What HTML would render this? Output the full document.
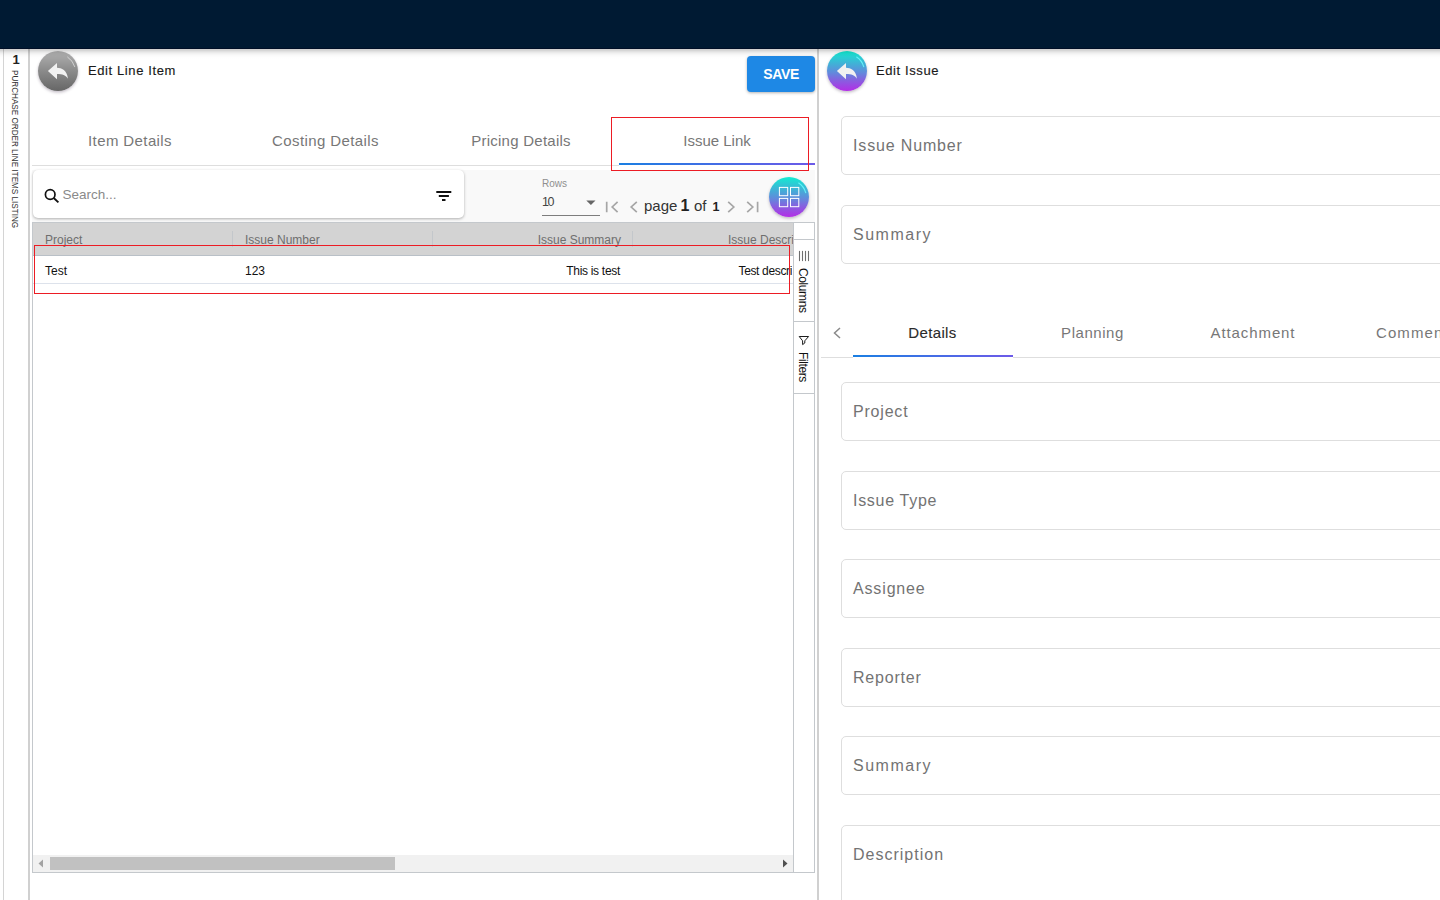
<!DOCTYPE html>
<html lang="en">
<head>
<meta charset="utf-8">
<title>Edit Line Item</title>
<style>
*{box-sizing:border-box;margin:0;padding:0}
html,body{width:1440px;height:900px;overflow:hidden;background:#fff}
body{font-family:"Liberation Sans",sans-serif;color:#222;position:relative}
.abs{position:absolute}
.t{position:absolute;white-space:nowrap;line-height:1}
#topbar{left:0;top:0;width:1440px;height:49px;background:#001a33;border-bottom:1px solid #000f27;z-index:10}
#topshadow{left:0;top:49px;width:1440px;height:11px;z-index:10;background:linear-gradient(180deg,rgba(0,0,0,.17) 0,rgba(0,0,0,.19) 1px,rgba(0,0,0,.135) 2px,rgba(0,0,0,.1) 3px,rgba(0,0,0,.067) 4px,rgba(0,0,0,.043) 5px,rgba(0,0,0,.027) 6px,rgba(0,0,0,.016) 7px,rgba(0,0,0,.008) 8px,rgba(0,0,0,.004) 9px,rgba(0,0,0,0) 10px)}
/* left strip */
#strip-l1{left:3px;top:48px;width:1px;height:852px;background:#d4d4d4}
#strip-l2{left:28px;top:48px;width:2px;height:852px;background:#d0d0d0}
#strip-num{left:12.5px;top:53px;font-size:13px;font-weight:bold;color:#222}
#strip-txt{left:19.5px;top:70px;font-size:9.8px;color:#333;transform-origin:0 0;transform:rotate(90deg) scaleX(.83);letter-spacing:0}
/* divider */
#divider{left:817px;top:48px;width:2px;height:852px;background:#d0d0d0}
.circ{border-radius:50%;width:40px;height:40px;box-shadow:0 1.5px 3px rgba(60,40,70,.3)}
#back1{left:38px;top:51px;background:linear-gradient(180deg,#b2b2b2 0%,#8e8e8e 45%,#666 100%)}
#back2{left:827px;top:51px;background:linear-gradient(180deg,#12ecd2 0%,#3eb4d6 30%,#6388dc 55%,#8a5ce0 75%,#b32ee6 100%)}
#gridbtn{left:769px;top:177px;background:linear-gradient(180deg,#12ecd2 0%,#3eb4d6 30%,#6388dc 55%,#8a5ce0 75%,#b32ee6 100%)}
.ttl{font-size:13px;color:#1a1a1a;font-weight:normal;-webkit-text-stroke:.15px #1a1a1a}
#save{left:747px;top:56px;width:68px;height:36px;background:#1e88e5;border-radius:4px;box-shadow:0 1px 3px rgba(0,0,0,.3);color:#fff;font-weight:bold;font-size:14px;text-align:center;line-height:37px;letter-spacing:-.3px;text-indent:.3px}
.tab{font-size:15px;color:#777;transform:translateX(-50%)}
.fld{position:absolute;left:841px;width:640px;height:59px;border:1px solid #dedede;border-radius:5px;background:#fff}
.fld span{position:absolute;left:11px;top:21px;font-size:16px;line-height:1;color:#737373;white-space:nowrap}
.hdr{font-size:12px;color:#6e6e6e}
.cell{font-size:12px;color:#111}
</style>
</head>
<body>
<div id="topbar" class="abs"></div>
<div id="topshadow" class="abs"></div>

<!-- left strip -->
<div id="strip-l1" class="abs"></div>
<div id="strip-l2" class="abs"></div>
<div id="strip-num" class="t">1</div>
<div id="strip-txt" class="t">PURCHASE ORDER LINE ITEMS LISTING</div>

<!-- LEFT PANEL -->
<div id="back1" class="abs circ">
<svg width="40" height="40" viewBox="0 0 40 40"><path d="M9.9 19.9 L19 11.9 V16.8 C23.5 16.9 29.2 19.3 29.9 27.8 C27.8 24.4 24.5 23.1 19 23.1 V28.2 Z" fill="#f1f1f1"/><path d="M29.7 6.1 A17.5 17.5 0 0 1 36.7 15.6" stroke="rgba(255,255,255,.55)" stroke-width="1" fill="none" stroke-linecap="round"/></svg>
</div>
<div class="t ttl" style="left:88px;top:64px;letter-spacing:.6px">Edit Line Item</div>
<div id="save" class="abs">SAVE</div>

<!-- tabs -->
<div class="abs" style="left:32px;top:165px;width:783px;height:1px;background:#dedede"></div>
<div class="t tab" style="left:130px;top:133px;letter-spacing:.4px">Item Details</div>
<div class="t tab" style="left:325.5px;top:133px;letter-spacing:.4px">Costing Details</div>
<div class="t tab" style="left:521px;top:133px;letter-spacing:.25px">Pricing Details</div>
<div class="t tab" style="left:717px;top:133px;letter-spacing:0">Issue Link</div>
<div class="abs" style="left:619px;top:163px;width:196px;height:3px;background:#fff"></div>
<div class="abs" style="left:619px;top:163px;width:196px;height:2px;background:linear-gradient(90deg,#1a7fe2,#6d5ae8)"></div>

<!-- toolbar -->
<div class="abs" style="left:32px;top:170px;width:783px;height:52px;background:#f9f9f9"></div>
<div class="abs" style="left:33px;top:170px;width:431px;height:48px;background:#fff;border-radius:5px;box-shadow:0 1px 3px rgba(0,0,0,.3)"></div>
<svg class="abs" style="left:42px;top:186px" width="18" height="18" viewBox="0 0 18 18"><circle cx="8.2" cy="8.5" r="4.8" fill="none" stroke="#111" stroke-width="1.7"/><path d="M11.7 12 L16.4 16.4" stroke="#111" stroke-width="1.9"/></svg>
<div class="t" style="left:62.5px;top:188px;font-size:13.5px;color:#8a8a8a">Search...</div>
<svg class="abs" style="left:436px;top:191px" width="16" height="10" viewBox="0 0 16 10"><path d="M0.3 1H15.3M2.8 5H12.9M6 9H9.5" stroke="#111" stroke-width="2"/></svg>

<div class="t" style="left:542px;top:179px;font-size:10px;color:#8f8f8f">Rows</div>
<div class="t" style="left:542px;top:196px;font-size:12.5px;color:#444;letter-spacing:-1.5px">10</div>
<svg class="abs" style="left:586px;top:200px" width="10" height="6" viewBox="0 0 10 6"><path d="M0.3 0.4H9.5L4.9 5Z" fill="#666"/></svg>
<div class="abs" style="left:542px;top:215px;width:58px;height:1px;background:#7d7d7d"></div>
<svg class="abs" style="left:600px;top:198px" width="164" height="18" viewBox="0 0 164 18" fill="none" stroke="#a6a6a6" stroke-width="1.7"><path d="M6.7 3.8V14.3M17.6 3.8L12.2 9L17.6 14.2"/><path d="M36.8 3.8L31.2 9L36.8 14.2"/><path d="M128.2 3.8L133.8 9L128.2 14.2"/><path d="M147.2 3.8L152.8 9L147.2 14.2M157.6 3.8V14.3"/></svg>
<div class="t" style="left:644px;top:198px;font-size:15px;color:#333">page</div>
<div class="t" style="left:680.5px;top:198px;font-size:16px;color:#222;font-weight:bold">1</div>
<div class="t" style="left:694px;top:198px;font-size:15px;color:#333">of</div>
<div class="t" style="left:712.5px;top:201px;font-size:12.5px;color:#222;font-weight:bold">1</div>
<div class="abs" style="left:611px;top:117px;width:198px;height:54px;border:1px solid #ec1c24"></div>
<div id="gridbtn" class="abs circ">
<svg width="40" height="40" viewBox="0 0 40 40" fill="none" stroke="#fff" stroke-width="1"><rect x="10.4" y="10.4" width="8.3" height="8.3"/><rect x="21.5" y="10.4" width="8.3" height="8.3"/><rect x="10.4" y="21.4" width="8.3" height="8.3"/><rect x="21.5" y="21.4" width="8.3" height="8.3"/><path d="M29.7 6.1 A17.5 17.5 0 0 1 36.7 15.6" stroke="rgba(110,255,255,.8)" stroke-width="1.2" stroke-linecap="round"/></svg>
</div>

<!-- grid -->
<div class="abs" style="left:32px;top:222px;width:783px;height:651px;border:1px solid #c4c8cc;background:#fff"></div>
<div class="abs" style="left:33px;top:223px;width:760px;height:33px;background:#d3d3d3;border-bottom:1px solid #b9c0c7"></div>
<div class="abs" style="left:232px;top:231px;width:1px;height:16px;background:#c3c7cb"></div>
<div class="abs" style="left:432px;top:231px;width:1px;height:16px;background:#c3c7cb"></div>
<div class="abs" style="left:632px;top:231px;width:1px;height:16px;background:#c3c7cb"></div>
<div class="t hdr" style="left:45px;top:234px">Project</div>
<div class="t hdr" style="left:245px;top:234px">Issue Number</div>
<div class="t hdr" style="right:819px;top:234px">Issue Summary</div>
<div class="abs" style="left:633px;top:223px;width:160px;height:31px;overflow:hidden"><div class="t hdr" style="left:95px;top:11px">Issue Description</div></div>
<div class="abs" style="left:33px;top:283px;width:760px;height:1px;background:#dde2eb"></div>
<div class="t cell" style="left:45px;top:265px">Test</div>
<div class="t cell" style="left:245px;top:265px">123</div>
<div class="t cell" style="right:820px;top:265px;letter-spacing:-.3px">This is test</div>
<div class="abs" style="left:633px;top:256px;width:159px;height:27px;overflow:hidden"><div class="t cell" style="left:105.5px;top:9px;letter-spacing:-.35px">Test description</div></div>
<div class="abs" style="left:34px;top:245px;width:756px;height:49px;border:1px solid #ec1c24"></div>

<!-- side bar -->
<div class="abs" style="left:793px;top:223px;width:1px;height:649px;background:#c4c8cc"></div>
<div class="abs" style="left:793px;top:239px;width:22px;height:1px;background:#c4c8cc"></div>
<div class="abs" style="left:793px;top:321px;width:22px;height:1px;background:#c4c8cc"></div>
<div class="abs" style="left:793px;top:393px;width:22px;height:1px;background:#c4c8cc"></div>
<svg class="abs" style="left:798px;top:250px" width="12" height="12" viewBox="0 0 12 12"><path d="M1.5 1.2V10.6M4.5 1.2V10.6M7.5 1.2V10.6M10.5 1.2V10.6" stroke="#6e6e6e" stroke-width="1.1" stroke-linecap="round"/></svg>
<div class="t" style="left:809px;top:267.5px;font-size:12px;color:#111;transform-origin:0 0;transform:rotate(90deg);letter-spacing:-.4px">Columns</div>
<svg class="abs" style="left:798px;top:335px" width="12" height="12" viewBox="0 0 12 12"><path d="M1.2 1.5H10.6L6.8 5.8V8L4.6 9.6V5.8Z" fill="none" stroke="#1c1c1c" stroke-width="1" stroke-linejoin="round"/></svg>
<div class="t" style="left:809px;top:352px;font-size:12px;color:#111;transform-origin:0 0;transform:rotate(90deg);letter-spacing:-.4px">Filters</div>

<!-- h scrollbar -->
<div class="abs" style="left:33px;top:855px;width:760px;height:17px;background:#f1f1f1"></div>
<div class="abs" style="left:50px;top:857px;width:345px;height:13px;background:#c1c1c1"></div>
<svg class="abs" style="left:38px;top:859px" width="6" height="9" viewBox="0 0 6 9"><path d="M5 0.5V8.5L0.5 4.5Z" fill="#a3a3a3"/></svg>
<svg class="abs" style="left:782px;top:859px" width="6" height="9" viewBox="0 0 6 9"><path d="M1 0.5V8.5L5.5 4.5Z" fill="#505050"/></svg>

<div id="divider" class="abs"></div>

<!-- RIGHT PANEL -->
<div id="back2" class="abs circ">
<svg width="40" height="40" viewBox="0 0 40 40"><path d="M9.9 19.9 L19 11.9 V16.8 C23.5 16.9 29.2 19.3 29.9 27.8 C27.8 24.4 24.5 23.1 19 23.1 V28.2 Z" fill="#f1f1f1"/><path d="M29.7 6.1 A17.5 17.5 0 0 1 36.7 15.6" stroke="rgba(110,255,255,.8)" stroke-width="1.2" fill="none" stroke-linecap="round"/></svg>
</div>
<div class="t ttl" style="left:876px;top:64px;letter-spacing:.6px">Edit Issue</div>

<div class="fld" style="top:116px"><span style="letter-spacing:.85px">Issue Number</span></div>
<div class="fld" style="top:205px"><span style="letter-spacing:1.5px">Summary</span></div>

<svg class="abs" style="left:832px;top:327px" width="10" height="12" viewBox="0 0 10 12"><path d="M8 1L2.5 6L8 11" fill="none" stroke="#8a8a8a" stroke-width="1.5"/></svg>
<div class="abs" style="left:821px;top:357px;width:619px;height:1px;background:#dedede"></div>
<div class="t tab" style="left:932.5px;top:325px;color:#2a2a2a;letter-spacing:.35px;-webkit-text-stroke:.12px #2a2a2a">Details</div>
<div class="t tab" style="left:1092.5px;top:325px;letter-spacing:.55px">Planning</div>
<div class="t tab" style="left:1253px;top:325px;letter-spacing:.9px">Attachment</div>
<div class="t tab" style="left:1376px;top:325px;transform:none;letter-spacing:1.1px">Comments</div>
<div class="abs" style="left:853px;top:355px;width:160px;height:3px;background:#fff"></div>
<div class="abs" style="left:853px;top:355px;width:160px;height:2px;background:linear-gradient(90deg,#1a7fe2,#6d5ae8)"></div>

<div class="fld" style="top:382px"><span style="letter-spacing:.8px">Project</span></div>
<div class="fld" style="top:471px"><span style="letter-spacing:.7px">Issue Type</span></div>
<div class="fld" style="top:559px"><span style="letter-spacing:.85px">Assignee</span></div>
<div class="fld" style="top:648px"><span style="letter-spacing:.8px">Reporter</span></div>
<div class="fld" style="top:736px"><span style="letter-spacing:1.5px">Summary</span></div>
<div class="fld" style="top:825px;height:120px"><span style="letter-spacing:1px">Description</span></div>
</body>
</html>
